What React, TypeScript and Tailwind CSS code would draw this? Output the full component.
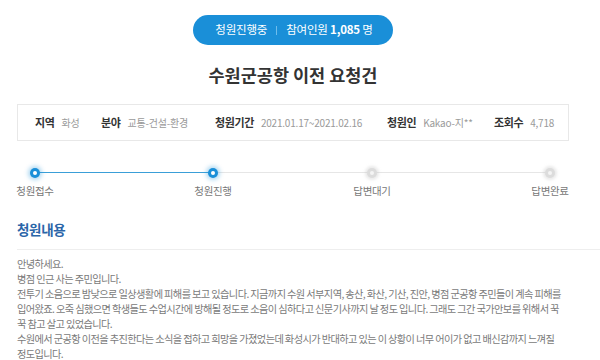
import React from "react";

const font = { fontFamily: '"Noto Sans CJK KR", "Noto Sans", sans-serif' };

function Dot({ active }: { active: boolean }) {
  return active ? (
    <div className="w-[10px] h-[10px] rounded-full bg-[#1a8fd8] flex items-center justify-center shadow-[0_0_4px_2px_rgba(26,143,216,0.35)]">
      <div className="w-[4px] h-[4px] rounded-full bg-white" />
    </div>
  ) : (
    <div className="w-[10px] h-[10px] rounded-full bg-[#dcdcdc] flex items-center justify-center shadow-[0_0_3px_2px_rgba(200,200,200,0.4)]">
      <div className="w-[4px] h-[4px] rounded-full bg-[#f4f4f4]" />
    </div>
  );
}

function Info({ label, value, w }: { label: string; value: string; w: string }) {
  return (
    <div className={`${w} flex items-center whitespace-nowrap`}>
      <b className="text-[#333] text-[11px] font-bold tracking-[-0.4px]">{label}</b>
      <span className="ml-[7px] text-[#9a9a9a] text-[10px] tracking-[-0.2px]">{value}</span>
    </div>
  );
}

const steps = [
  { label: "청원접수", active: true },
  { label: "청원진행", active: true },
  { label: "답변대기", active: false },
  { label: "답변완료", active: false },
];

export default function App() {
  const lines = [
    "안녕하세요.",
    "병점 인근 사는 주민입니다.",
    "전투기 소음으로 밤낮으로 일상생활에 피해를 보고 있습니다. 지금까지 수원 서부지역, 송산, 화산, 기산, 진안, 병점 군공항 주민들이 계속 피해를",
    "입어왔죠. 오죽 심했으면 학생들도 수업시간에 방해될 정도로 소음이 심하다고 신문기사까지 날 정도 입니다. 그래도 그간 국가안보를 위해서 꾹",
    "꾹 참고 살고 있었습니다.",
    "수원에서 군공항 이전을 추진한다는 소식을 접하고 희망을 가졌었는데 화성시가 반대하고 있는 이 상황이 너무 어이가 없고 배신감까지 느껴질",
    "정도입니다.",
  ];
  return (
    <div className="w-[600px] h-[360px] bg-white overflow-hidden" style={font}>
      <div className="ml-[17px] w-[552px]">
        <div className="flex justify-center pt-[15px]">
          <div className="h-[30px] pl-[22px] pr-[20px] rounded-full bg-[#1a8fd8] flex items-center text-white text-[11.5px] tracking-[-0.2px]">
            <span>청원진행중</span>
            <span className="mx-[9px] w-[1px] h-[9px] bg-[#6fbdec]" />
            <span>
              참여인원 <b className="font-bold">1,085</b> 명
            </span>
          </div>
        </div>
        <h1 className="text-center text-[17.5px] font-bold text-[#333] mt-[18px] leading-[24px]">
          수원군공항 이전 요청건
        </h1>
        <div className="mt-[17px] h-[37px] border border-[#e8e8e8] flex items-center pl-[17px]">
          <Info label="지역" value="화성" w="w-[66px]" />
          <Info label="분야" value="교통-건설-환경" w="w-[114px]" />
          <Info label="청원기간" value="2021.01.17~2021.02.16" w="w-[172px]" />
          <Info label="청원인" value="Kakao-지**" w="w-[107px]" />
          <Info label="조회수" value="4,718" w="w-[70px]" />
        </div>
        <div className="mt-[27px] relative">
          <div className="absolute left-[18px] w-[515px] top-[4px] h-[1px] bg-[#e6e6e6]" />
          <div className="absolute left-[18px] w-[178px] top-[4px] h-[1px] bg-[#3a9fd8]" />
          <div className="relative flex">
            {steps.map((s, i) => (
              <div
                key={i}
                className={`flex flex-col items-center w-[36px] ${i === 1 ? "ml-[142px]" : i === 2 ? "ml-[123px]" : i === 3 ? "ml-[142px]" : ""}`}
              >
                <Dot active={s.active} />
                <div className="mt-[6px] text-[10.5px] text-[#777] whitespace-nowrap leading-[14px] tracking-[-0.3px]">
                  {s.label}
                </div>
              </div>
            ))}
          </div>
        </div>
        <h2 className="mt-[21px] text-[13.5px] font-bold text-[#2a65a8] leading-[20px] tracking-[-0.3px]">청원내용</h2>
        <div className="mt-[10px] h-[1px] bg-[#eeeeee] w-[583px]" />
        <div className="mt-[6px] text-[10.2px] text-[#7a7a7a] leading-[15px] tracking-[-0.6px]">
          {lines.map((l, i) => (
            <div key={i} className="whitespace-nowrap">
              {l}
            </div>
          ))}
        </div>
      </div>
    </div>
  );
}
